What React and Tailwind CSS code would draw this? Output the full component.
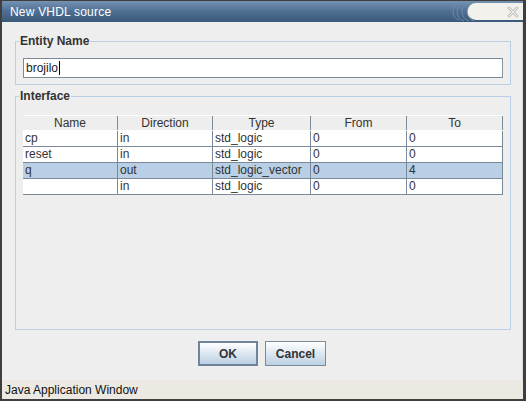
import React from 'react';

const rows = [
  { name: 'cp', dir: 'in', type: 'std_logic', from: '0', to: '0' },
  { name: 'reset', dir: 'in', type: 'std_logic', from: '0', to: '0' },
  { name: 'q', dir: 'out', type: 'std_logic_vector', from: '0', to: '4', selected: true },
  { name: '', dir: 'in', type: 'std_logic', from: '0', to: '0' },
];

const headers = ['Name', 'Direction', 'Type', 'From', 'To'];

function TitleBar() {
  return (
    <div className="relative h-[21px] bg-gradient-to-b from-[#7592b2] via-[#4f6f92] to-[#3a5878] flex items-center pl-[8px]">
      <span className="text-white text-[12px] leading-none tracking-[0.2px]">New VHDL source</span>
      {/* decorative close pill */}
      <svg className="absolute right-0 top-0" width="75" height="21" viewBox="0 0 75 21">
        <g fill="none" stroke="#6d8bab" strokeWidth="1">
          <path d="M26 1 A10 10 0 0 0 26 20" />
          <path d="M21 1 A10 10 0 0 0 21 20" />
          <path d="M16 1 A10 10 0 0 0 16 20" />
          <path d="M11 2 A9 9 0 0 0 11 19" />
        </g>
        <path d="M28 2 H75 V19 H28 A8.5 8.5 0 0 1 28 2 Z" fill="#f3f1ec" />
        <path d="M61 7 L69 15 M69 7 L61 15" stroke="#c6c6c6" strokeWidth="3" strokeLinecap="round" />
        <path d="M61 7 L69 15 M69 7 L61 15" stroke="#f3f1ec" strokeWidth="1" strokeLinecap="round" />
      </svg>
    </div>
  );
}

function Group({ title, className, children }) {
  return (
    <fieldset className={`border border-[#b8cfe5] px-0 ${className}`}>
      <legend className="ml-[3px] px-[1px] text-[12px] leading-[14px] font-bold text-[#333333]">{title}</legend>
      {children}
    </fieldset>
  );
}

function Table() {
  return (
    <div className="mx-[7px] mt-[12px] text-[12px] text-[#333333]">
      <div className="grid grid-cols-[95px_95px_98px_96px_96px] border-t border-white bg-[#eeeeee] border-b border-[#7a8a99]">
        {headers.map((h) => (
          <div key={h} className="h-[14px] leading-[14px] text-center border-r border-[#7a8a99]">
            {h}
          </div>
        ))}
      </div>
      {rows.map((r, i) => (
        <div
          key={i}
          className={`grid grid-cols-[95px_95px_98px_96px_96px] border-b border-[#7a8a99] ${r.selected ? 'bg-[#b8cfe5]' : 'bg-white'}`}
        >
          {[r.name, r.dir, r.type, r.from, r.to].map((c, j) => (
            <div key={j} className="h-[15px] leading-[15px] pl-[2px] border-r border-[#7a8a99] whitespace-nowrap overflow-hidden">
              {c}
            </div>
          ))}
        </div>
      ))}
    </div>
  );
}

export default function App() {
  return (
    <div
      className="w-[526px] h-[401px] flex flex-col bg-[#eeeeee] border-t border-l-2 border-r-[3px] border-b-2 border-[#3f3f3f]"
      style={{ fontFamily: '"Liberation Sans", Arial, sans-serif' }}
    >
      <TitleBar />

      <div className="flex-1 flex flex-col border-r border-[#dcdcdc]">
        <Group title="Entity Name" className="mt-[12px] ml-[13px] mr-[11px] pb-[6px]">
          <div className="mx-[7px] mt-[10px] h-[20px] border border-[#7a8a99] border-r-[#8a97a3] bg-white flex items-center pl-[2px] text-[12px] text-[#222222]">
            brojilo
            <span className="ml-[1px] w-[1px] h-[14px] bg-black" />
          </div>
        </Group>

        <Group title="Interface" className="mt-[4px] ml-[13px] mr-[11px] pb-[134px]">
          <Table />
        </Group>

        <div className="mt-[11px] flex justify-center gap-[7px]">
          <button className="w-[60px] h-[25px] border-2 border-[#6f849a] bg-gradient-to-b from-white to-[#bcd0e4] text-[12px] font-bold text-[#333333]">
            OK
          </button>
          <button className="w-[61px] h-[25px] border border-[#7a8a99] bg-gradient-to-b from-white to-[#bcd0e4] text-[12px] font-bold text-[#333333]">
            Cancel
          </button>
        </div>
      </div>

      <div className="h-[19px] bg-[#ece9e3] flex items-center pl-[3px] text-[12px] text-[#111111]">
        Java Application Window
      </div>
    </div>
  );
}
